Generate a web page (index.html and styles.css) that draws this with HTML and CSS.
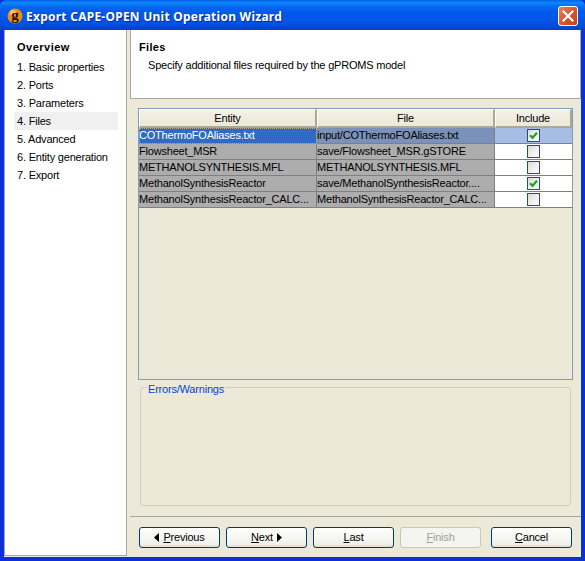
FILE: index.html
```html
<!DOCTYPE html>
<html lang="en">
<head>
<meta charset="utf-8">
<title>Export CAPE-OPEN Unit Operation Wizard</title>
<link rel="stylesheet" href="styles.css">
</head>
<body>
<div class="window">
  <header class="titlebar">
    <svg class="app-icon" width="16" height="16" viewBox="0 0 16 16" aria-hidden="true">
      <circle cx="8" cy="8" r="7.5" fill="#f28a1c"/>
      <circle cx="6" cy="5" r="3" fill="#ffc470"/>
      <text x="8" y="12" text-anchor="middle" class="app-g">g</text>
    </svg>
    <span class="title-text">Export CAPE-OPEN Unit Operation Wizard</span>
    <button class="close" aria-label="Close">
      <svg width="12" height="12" viewBox="0 0 12 12" aria-hidden="true"><path d="M1.5 1.5L10.5 10.5M10.5 1.5L1.5 10.5" stroke="#fff" stroke-width="2.2" stroke-linecap="square"/></svg>
    </button>
  </header>
  <div class="client">
    <nav class="sidebar">
      <h2 class="side-title">Overview</h2>
      <ol class="steps">
        <li class="step">1. Basic properties</li>
        <li class="step">2. Ports</li>
        <li class="step">3. Parameters</li>
        <li class="step step-active">4. Files</li>
        <li class="step">5. Advanced</li>
        <li class="step">6. Entity generation</li>
        <li class="step">7. Export</li>
      </ol>
    </nav>
    <main class="main">
      <section class="intro">
        <h1 class="intro-title">Files</h1>
        <p class="intro-text">Specify additional files required by the gPROMS model</p>
      </section>
      <div class="content">
        <div class="table">
          <div class="row head">
            <div class="th">Entity</div><div class="th">File</div><div class="th">Include</div>
          </div>
          <div class="row selected">
            <div class="cell focus">COThermoFOAliases.txt</div><div class="cell">input/COThermoFOAliases.txt</div><div class="cell check-cell"><span class="check"><svg width="11" height="11" viewBox="0 0 11 11"><path d="M2 5.2L4.5 7.8L9 2.8" fill="none" stroke="#21a121" stroke-width="2.2"/></svg></span></div>
          </div>
          <div class="row">
            <div class="cell">Flowsheet_MSR</div><div class="cell">save/Flowsheet_MSR.gSTORE</div><div class="cell check-cell"><span class="check"></span></div>
          </div>
          <div class="row">
            <div class="cell">METHANOLSYNTHESIS.MFL</div><div class="cell">METHANOLSYNTHESIS.MFL</div><div class="cell check-cell"><span class="check"></span></div>
          </div>
          <div class="row">
            <div class="cell">MethanolSynthesisReactor</div><div class="cell">save/MethanolSynthesisReactor....</div><div class="cell check-cell"><span class="check"><svg width="11" height="11" viewBox="0 0 11 11"><path d="M2 5.2L4.5 7.8L9 2.8" fill="none" stroke="#21a121" stroke-width="2.2"/></svg></span></div>
          </div>
          <div class="row">
            <div class="cell">MethanolSynthesisReactor_CALC...</div><div class="cell">MethanolSynthesisReactor_CALC...</div><div class="cell check-cell"><span class="check"></span></div>
          </div>
        </div>
        <fieldset class="group">
          <legend class="group-label">Errors/Warnings</legend>
        </fieldset>
      </div>
      <footer class="actions">
        <button class="btn"><svg class="arrow" width="5" height="9" viewBox="0 0 5 9"><path d="M5 0V9L0 4.5Z"/></svg><span><u>P</u>revious</span></button>
        <button class="btn"><span><u>N</u>ext</span><svg class="arrow" width="5" height="9" viewBox="0 0 5 9"><path d="M0 0V9L5 4.5Z"/></svg></button>
        <button class="btn"><span><u>L</u>ast</span></button>
        <button class="btn btn-disabled" disabled><span><u>F</u>inish</span></button>
        <button class="btn btn-cancel"><span><u>C</u>ancel</span></button>
      </footer>
    </main>
  </div>
</div>
</body>
</html>
```
FILE: styles.css
```css
* { box-sizing: border-box; }
html, body { margin: 0; padding: 0; }
body {
  width: 585px;
  height: 561px;
  overflow: hidden;
  font-family: "Liberation Sans", Arial, sans-serif;
  font-size: 11px;
  letter-spacing: -0.2px;
  color: #000;
}
.window {
  width: 585px;
  height: 561px;
  display: flex;
  flex-direction: column;
  background: #0831d9;
}
.titlebar {
  height: 30px;
  flex: none;
  display: flex;
  align-items: center;
  padding: 2px 7px 0 7px;
  background: linear-gradient(180deg, #0a5fe6 0, #0a8bff 3px, #0a6cf0 6px, #0058ee 12px, #0055e5 22px, #0047d0 28px, #0a3fc0 30px);
  border-radius: 6px 6px 0 0;
}
.app-icon { flex: none; display: block; }
.app-g { font: bold 15px "Liberation Serif", serif; fill: #1a1000; }
.title-text {
  margin-left: 3px;
  flex: 1;
  font-family: "Noto Sans", sans-serif;
  font-weight: 700;
  font-size: 12px;
  letter-spacing: 0.25px;
  color: #fff;
  text-shadow: 1px 1px 0 #0a2a9a;
  white-space: nowrap;
}
.close {
  width: 20px;
  height: 20px;
  margin-top: -1px;
  padding: 0;
  display: flex;
  align-items: center;
  justify-content: center;
  border: 1px solid #fff;
  border-radius: 3px;
  background: linear-gradient(135deg, #e88060 0, #e0582f 45%, #c83c14 100%);
}
.client {
  flex: 1;
  min-height: 0;
  display: flex;
  margin: 0 4px 4px 4px;
  background: #ece9d8;
}
.sidebar {
  width: 123px;
  height: 526px;
  flex: none;
  background: #fff;
  border: 1px solid #aca899;
  border-top: 0;
  padding: 9px 8px 0 9px;
}
.side-title {
  margin: 0 0 3px 3px;
  height: 16px;
  line-height: 16px;
  font-size: 11px;
  font-weight: 700;
  letter-spacing: 0.5px;
}
.steps { list-style: none; margin: 0; padding: 0; }
.step {
  height: 18px;
  line-height: 18px;
  padding-left: 3px;
  white-space: nowrap;
}
.step-active { background: #f0f0f0; }
.main {
  flex: 1;
  min-width: 0;
  display: flex;
  flex-direction: column;
  padding-left: 3px;
}
.intro {
  height: 69px;
  flex: none;
  background: #fff;
  border: 1px solid #aca899;
  border-top: 0;
  padding: 9px 8px 0 8px;
}
.intro-title { margin: 0; height: 16px; line-height: 16px; font-size: 11px; font-weight: 700; letter-spacing: 0.3px; }
.intro-text { margin: 2px 0 0 9px; height: 16px; line-height: 16px; }
.content {
  height: 417px;
  flex: none;
  padding: 9px 8px 0 8px;
}
.table {
  height: 272px;
  width: 435px;
  background: #ece9d8;
  border: 1px solid #7f9db9;
}
.row {
  display: grid;
  grid-template-columns: 178px 178px 77px;
  height: 16px;
}
.head { height: 19px; }
.th {
  text-align: center;
  line-height: 16px;
  background: linear-gradient(180deg, #f3f1e6, #ece9d8);
  border-top: 1px solid #fff;
  border-left: 1px solid #fff;
  border-right: 2px solid #aca899;
  border-bottom: 2px solid #aca899;
}
.cell {
  background: #adadad;
  border-right: 1px solid #808080;
  border-bottom: 1px solid #808080;
  line-height: 15px;
  padding-left: 0;
  white-space: nowrap;
  overflow: hidden;
}
.check-cell {
  background: #fff;
  border-right: 0;
  display: flex;
  align-items: center;
  justify-content: center;
}
.selected .cell { background: #7a92ba; }
.selected .focus { background: #316ac5; color: #fff; outline: 1px dotted #e8a33d; outline-offset: -1px; }
.selected .check-cell { background: #a6bde4; }
.check {
  width: 13px;
  height: 13px;
  display: flex;
  align-items: center;
  justify-content: center;
  border: 1px solid #1c5180;
  background: linear-gradient(135deg, #dcdcd7, #fff);
}
.group {
  width: 431px;
  height: 126px;
  margin: 0 0 0 2px;
  padding: 0;
  border: 1px solid #d0d0bf;
  border-radius: 3px;
}
.group-label {
  margin-left: 6px;
  padding: 4px 1px 0;
  height: 14px;
  line-height: 10px;
  color: #0046d5;
}
.actions {
  flex: 1;
  border-top: 1px solid #aca899;
  padding: 10px 9px 0 9px;
  display: flex;
  align-items: flex-start;
  gap: 6px;
}
.btn {
  width: 81px;
  height: 21px;
  padding: 0 0 1px;
  display: flex;
  align-items: center;
  justify-content: center;
  gap: 4px;
  font: inherit;
  letter-spacing: inherit;
  color: #000;
  border: 1px solid #003c74;
  border-radius: 3px;
  background: linear-gradient(180deg, #fff, #f0f0ea 85%, #dcd8cc);
}
.btn-disabled { color: #a1a192; border-color: #c9c7ba; background: #f4f4f0; }
.btn-cancel { margin-left: auto; }
.arrow { display: block; fill: #000; }
```
